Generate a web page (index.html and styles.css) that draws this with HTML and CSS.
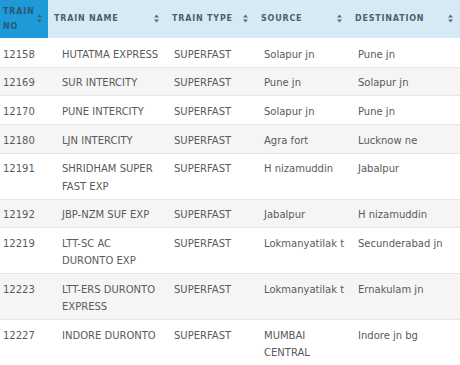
FILE: index.html
```html
<!DOCTYPE html>
<html>
<head>
<meta charset="utf-8">
<link rel="stylesheet" href="styles.css">
</head>
<body>
<div class="wrap">
  <table class="head">
    <colgroup><col class="h1"><col class="h2"><col class="h3"><col class="h4"><col class="h5"></colgroup>
    <thead>
      <tr>
        <th class="active"><div class="th"><span>TRAIN<br>NO</span><svg class="sort" viewBox="0 0 5 9" width="5" height="9"><path d="M0 3.6H5L2.5 0.6Z M0 5.4H5L2.5 8.4Z"/></svg></div></th>
        <th><div class="th"><span>TRAIN NAME</span><svg class="sort" viewBox="0 0 5 9" width="5" height="9"><path d="M0 3.6H5L2.5 0.6Z M0 5.4H5L2.5 8.4Z"/></svg></div></th>
        <th><div class="th"><span>TRAIN TYPE</span><svg class="sort" viewBox="0 0 5 9" width="5" height="9"><path d="M0 3.6H5L2.5 0.6Z M0 5.4H5L2.5 8.4Z"/></svg></div></th>
        <th><div class="th"><span>SOURCE</span><svg class="sort" viewBox="0 0 5 9" width="5" height="9"><path d="M0 3.6H5L2.5 0.6Z M0 5.4H5L2.5 8.4Z"/></svg></div></th>
        <th><div class="th"><span>DESTINATION</span><svg class="sort" viewBox="0 0 5 9" width="5" height="9"><path d="M0 3.6H5L2.5 0.6Z M0 5.4H5L2.5 8.4Z"/></svg></div></th>
      </tr>
    </thead>
  </table>
  <table class="body">
    <colgroup><col class="b1"><col class="b2"><col class="b3"><col class="b4"><col class="b5"></colgroup>
    <tbody>
      <tr><td>12158</td><td>HUTATMA EXPRESS</td><td>SUPERFAST</td><td>Solapur jn</td><td>Pune jn</td></tr>
      <tr><td>12169</td><td>SUR INTERCITY</td><td>SUPERFAST</td><td>Pune jn</td><td>Solapur jn</td></tr>
      <tr><td>12170</td><td>PUNE INTERCITY</td><td>SUPERFAST</td><td>Solapur jn</td><td>Pune jn</td></tr>
      <tr><td>12180</td><td>LJN INTERCITY</td><td>SUPERFAST</td><td>Agra fort</td><td>Lucknow ne</td></tr>
      <tr><td>12191</td><td>SHRIDHAM SUPER FAST EXP</td><td>SUPERFAST</td><td>H nizamuddin</td><td>Jabalpur</td></tr>
      <tr><td>12192</td><td>JBP-NZM SUF EXP</td><td>SUPERFAST</td><td>Jabalpur</td><td>H nizamuddin</td></tr>
      <tr><td>12219</td><td>LTT-SC AC DURONTO EXP</td><td>SUPERFAST</td><td>Lokmanyatilak t</td><td>Secunderabad jn</td></tr>
      <tr><td>12223</td><td>LTT-ERS DURONTO EXPRESS</td><td>SUPERFAST</td><td>Lokmanyatilak t</td><td>Ernakulam jn</td></tr>
      <tr><td>12227</td><td>INDORE DURONTO</td><td>SUPERFAST</td><td>MUMBAI CENTRAL</td><td>Indore jn bg</td></tr>
    </tbody>
  </table>
</div>
</body>
</html>
```

FILE: styles.css
```css
html, body {
  margin: 0;
  padding: 0;
  background: #ffffff;
}

.wrap {
  width: 460px;
  font-family: "DejaVu Sans", Verdana, sans-serif;
}

table {
  width: 460px;
  border-collapse: collapse;
  table-layout: fixed;
}

.h1 { width: 48px; }
.h2 { width: 118px; }
.h3 { width: 89px; }
.h4 { width: 94px; }
.h5 { width: 111px; }

.head th {
  background: #d6eaf6;
  color: #4e5f6b;
  font-size: 8px;
  font-weight: bold;
  letter-spacing: 0.8px;
  text-align: left;
  line-height: 15px;
  padding: 4px 7px 4px 6px;
  height: 30px;
  vertical-align: middle;
}

.head th:first-child {
  padding-left: 3px;
  padding-right: 6px;
}

.head th.active {
  background: #1e9ad8;
  color: #2b5875;
}

.th {
  display: flex;
  align-items: center;
  justify-content: space-between;
  margin-top: -1px;
}

.sort {
  flex: none;
  fill: #5d6a73;
}

.active .sort {
  fill: #2f6485;
}

.b1 { width: 62px; }
.b2 { width: 112px; }
.b3 { width: 90px; }
.b4 { width: 94px; }
.b5 { width: 102px; }

.body td {
  font-size: 10px;
  line-height: 17.2px;
  color: #5a5a5a;
  padding: 6.5px 10px 4px 0;
  vertical-align: top;
  border-bottom: 1px solid #e6e6e6;
}

.body tr:first-child td {
  padding-top: 7.5px;
}

.body td:first-child {
  padding-left: 3px;
}

.body tr:nth-child(even) td {
  background: #f5f5f5;
}
```
